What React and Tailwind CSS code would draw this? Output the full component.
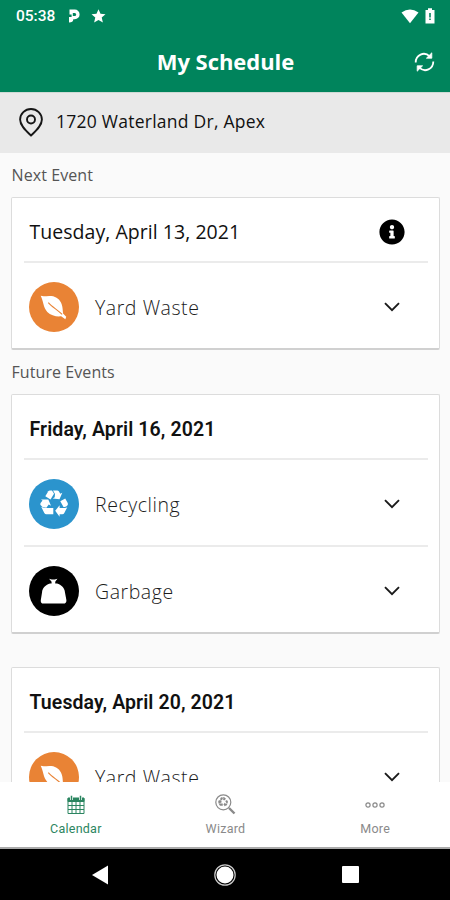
import React from "react";
import { FaInfoCircle } from "react-icons/fa";

function Leaf() {
  return (
    <svg viewBox="0 0 50 50" className="size-full">
      <path d="M11.800 14 C15 15 18 13.800 22.500 14.200 C28 14.800 31.500 18 33 22.500 C34.200 26 34 29 34.400 31.700 L37.600 35.200 L36.700 37.600 L32.500 34.600 C28 35.200 22 34 18.500 30.300 C14.300 25.800 14.500 19 11.800 14 Z" fill="#fff" />
      <path d="M19.500 20.800 C23 25 28.500 28 33.500 32.800" fill="none" stroke="#e98335" strokeWidth="1.100" />
    </svg>
  );
}

function Bag() {
  return (
    <svg viewBox="0 0 50 50" className="size-full" fill="#fff">
      <path d="M20.300 13 L23 13.600 H26 L28.700 13 L26.500 15.800 V17.600 H28.300 C32.500 18.800 36.300 22.500 36.300 26.500 L37.800 34.500 C37.900 36.900 36.800 38 34.800 38 H14.600 C12.600 38 11.700 36.900 11.900 34.500 L13.200 26.500 C13.200 22.500 17 18.800 21.300 17.600 H22.800 V15.800 Z" />
    </svg>
  );
}

function Recycle({ size, className }) {
  return (
    <svg width={size} height={size} viewBox="0 0 28 28" fill="currentColor" className={className}>
      <path d="M5.300 6.200 L8.300 1.200 Q8.900 .4 9.900 .4 H12 L14 3.800 L10.500 9.500 Z" />
      <path d="M13 .4 H17.300 Q18.300 .4 18.800 1.200 L20.300 3.800 L22.300 2.700 L19.500 9.300 L12.700 8.500 L14.700 7.200 L15 4 Z" />
      <path d="M20.300 11.300 L25.200 8.400 L27.600 12.800 Q28.200 14 27.500 15.200 Q26.500 17 24.500 17 H23.500 Z" />
      <path d="M27.300 17.200 L24.300 23 Q23.700 24.200 22.300 24.200 H19.600 V26.800 L15.200 20.800 L19.600 15.200 V18 H24.500 Q26.300 18 27.300 17.200 Z" />
      <path d="M1 9.400 L8.300 9.400 L11 15.700 L8.700 14.500 L6.400 17.700 L2.800 17.200 L.5 15 Q0 14 .6 12.900 L2.500 10.500 Z" />
      <path d="M1.200 16.800 L4 18 H13.300 V24.200 H6.300 Q5 24.200 4.300 23 Z" />
    </svg>
  );
}

const kinds = {
  yard: { label: "Yard Waste", color: "bg-[#e98335]", icon: <Leaf /> },
  recycling: { label: "Recycling", color: "bg-[#2b94cd]", icon: <Recycle size={28} className="text-white" /> },
  garbage: { label: "Garbage", color: "bg-black", icon: <Bag /> },
};

function EventRow({ kind }) {
  const { label, color, icon } = kinds[kind];
  return (
    <div className="ml-3 mr-[11px] flex h-[87px] items-center border-t-2 border-[#ebebeb] pl-[5px] pr-[27.500px] pt-[3px]">
      <div className={`flex size-[49.500px] shrink-0 items-center justify-center rounded-full ${color}`}>{icon}</div>
      <span className="ml-[16.500px] flex-1 whitespace-nowrap pt-[1px] text-[19.500px] font-light tracking-[0.55px] text-[#1c1c1c]">{label}</span>
      <svg width="18" height="12" viewBox="0 0 18 12" fill="none" stroke="#1a1a1a" strokeWidth="1.900">
        <path d="M2 2.200 L9 9.200 L16 2.200" />
      </svg>
    </div>
  );
}

function Card({ date, bold, info, events }) {
  return (
    <section className="ml-[11px] mr-[10px] shrink-0 rounded-[2px] border border-b-2 border-[#dcdcdc] border-b-[#d0d0d0] bg-white">
      <header className="flex h-[63px] items-center justify-between pl-[17.500px] pr-[34.500px] pt-[4px]">
        <h2 className={bold ? "whitespace-nowrap pt-[3px] font-[Roboto,sans-serif] text-[19.500px] font-semibold tracking-[0.1px] text-[#111]" : "whitespace-nowrap text-[19.500px] tracking-[0.04px] text-[#111]"}>{date}</h2>
        {info && <FaInfoCircle size={26} color="#000" />}
      </header>
      {events.map((kind) => <EventRow key={kind} kind={kind} />)}
    </section>
  );
}

function Tab({ label, active, children }) {
  return (
    <button className={`flex flex-1 flex-col items-center ${active ? "text-[#2b8560]" : "text-[#8a8a8a]"}`}>
      <span className="flex h-[45px] items-center">{children}</span>
      <span className="font-[Roboto,sans-serif] text-[12.500px] leading-[4px] tracking-[0.25px]">{label}</span>
    </button>
  );
}

export default function App() {
  return (
    <div className="flex h-[900px] w-[450px] flex-col overflow-hidden bg-[#fafafa] font-['Open_Sans',sans-serif]">
      <div className="flex h-8 shrink-0 items-center bg-[#00845c] pl-4 pr-[15px] text-white">
        <span className="w-[40px] pt-[2px] font-[Roboto,sans-serif] text-[15.500px] font-medium">05:38</span>
        <svg className="ml-[12px]" width="12" height="14" viewBox="0 0 12 14">
          <path fillRule="evenodd" d="M1.500 .5 H6.800 A4.800 4.900 0 0 1 6.800 10.300 H5.300 C5.300 12.500 3.800 13.600 1 13.600 V8 H3.600 V5.500 H1.500 Z M4.800 4 V7 H6.700 A1.500 1.500 0 0 0 6.700 4 Z" fill="#fff" />
        </svg>
        <svg className="ml-[11px]" width="15" height="14" viewBox="0 0 15 14" fill="#fff">
          <path d="M7.500 .2 L9.500 4.800 L14.500 5.300 L10.700 8.600 L11.900 13.500 L7.500 10.900 L3.100 13.500 L4.300 8.600 L.5 5.300 L5.500 4.800 Z" />
        </svg>
        <div className="flex-1" />
        <svg width="18" height="15" viewBox="0 0 18 15" fill="#fff"><path d="M.5 3.400 Q9 -2.200 17.500 3.400 L9 14.300 Z" /></svg>
        <svg className="ml-[6px]" width="10" height="16" viewBox="0 0 10 16">
          <path d="M3 .3 H7 V2 H9.500 V15.500 H.5 V2 H3 Z" fill="#fff" />
          <path d="M4.200 5 H5.800 V9.500 H4.200 Z M4.200 10.600 H5.800 V12 H4.200 Z" fill="#00845c" />
        </svg>
      </div>
      <header className="flex h-[60px] shrink-0 items-center bg-[#00845c] pl-[37px] pr-[15px] text-white">
        <h1 className="flex-1 pb-[1px] text-center text-[22px] font-bold tracking-[-0.05px]">My Schedule</h1>
        <svg width="21" height="20" viewBox="0 0 21 20" fill="none" stroke="#fff" strokeWidth="1.800">
          <path d="M1.700 10.500 C1.700 3 10 -1 15.700 4.300 M19.300 9.500 C19.300 17 11 21 5.300 15.700" />
          <path d="M17.800 .8 V6.200 H12.400 Z M3.200 19.200 V13.800 H8.600 Z" fill="#fff" strokeWidth=".8" />
        </svg>
      </header>
      <div className="flex h-[61px] shrink-0 items-center border-t border-[#cfdad5] bg-[#e9e9e9] pb-[2px] pl-[19px]">
        <svg width="24" height="29" viewBox="0 0 24 29" fill="none" stroke="#161616" strokeWidth="1.900">
          <path d="M12 27.500 C7 22.800 1.100 17.800 1.100 11.500 A10.900 10.500 0 0 1 22.900 11.500 C22.900 17.800 17 22.800 12 27.500 Z" />
          <circle cx="12" cy="11.500" r="4" />
        </svg>
        <span className="ml-[13px] whitespace-nowrap pb-[2px] text-[17.500px] tracking-[0.25px] text-[#111]">1720 Waterland Dr, Apex</span>
      </div>
      <main className="flex min-h-0 flex-1 flex-col overflow-hidden">
        <p className="h-[44px] shrink-0 pl-[11.500px] text-[16px] leading-[45px] tracking-[0.08px] text-[#555]">Next Event</p>
        <Card date="Tuesday, April 13, 2021" info events={["yard"]} />
        <p className="h-[44px] shrink-0 pl-[11.500px] text-[16px] leading-[45px] tracking-[0.08px] text-[#555]">Future Events</p>
        <Card date="Friday, April 16, 2021" bold events={["recycling", "garbage"]} />
        <div className="h-[33px] shrink-0" />
        <Card date="Tuesday, April 20, 2021" bold events={["yard"]} />
      </main>
      <nav className="flex h-[67px] shrink-0 border-b-2 border-[#aaa] bg-white pl-px">
        <Tab label="Calendar" active>
          <svg width="18" height="20" viewBox="0 0 18 20" fill="none" stroke="currentColor">
            <path d="M1 3 H17 V18.500 H1 Z M1 10.500 H17 M1 14.500 H17 M5 7 V18.500 M9 7 V18.500 M13 7 V18.500" strokeWidth="1" />
            <path d="M1 3.500 H17 V6.500 H1 Z" fill="currentColor" />
            <path d="M4.500 .8 V5 M13.500 .8 V5" stroke="#fff" strokeWidth="3" />
            <path d="M4.500 .8 V5 M13.500 .8 V5" strokeWidth="1.500" />
          </svg>
        </Tab>
        <Tab label="Wizard">
          <span className="relative">
            <svg width="21" height="21" viewBox="0 0 21 21" fill="none" stroke="currentColor">
              <circle cx="8.300" cy="8.300" r="7.500" strokeWidth="1.200" />
              <path d="M14 14 L19.500 19.500" strokeWidth="2.400" />
            </svg>
            <Recycle size={10} className="absolute left-[3.300px] top-[3.300px]" />
          </span>
        </Tab>
        <Tab label="More">
          <svg width="20" height="8" viewBox="0 0 20 8" fill="none" stroke="currentColor" strokeWidth="1.200">
            <circle cx="3" cy="4" r="2.100" /><circle cx="10" cy="4" r="2.100" /><circle cx="17" cy="4" r="2.100" />
          </svg>
        </Tab>
      </nav>
      <div className="flex h-[51px] shrink-0 items-center justify-between bg-black pl-[92px] pr-[91px]">
        <svg width="16" height="20" viewBox="0 0 16 20"><path d="M0 10 L16 .5 V19.500 Z" fill="#fff" /></svg>
        <svg width="22" height="22" viewBox="0 0 22 22" fill="#fff"><circle cx="11" cy="11" r="10.200" fill="none" stroke="#ccc" strokeWidth="1.200" /><circle cx="11" cy="11" r="8.500" /></svg>
        <div className="size-[17.500px] rounded-[1px] bg-white" />
      </div>
    </div>
  );
}
